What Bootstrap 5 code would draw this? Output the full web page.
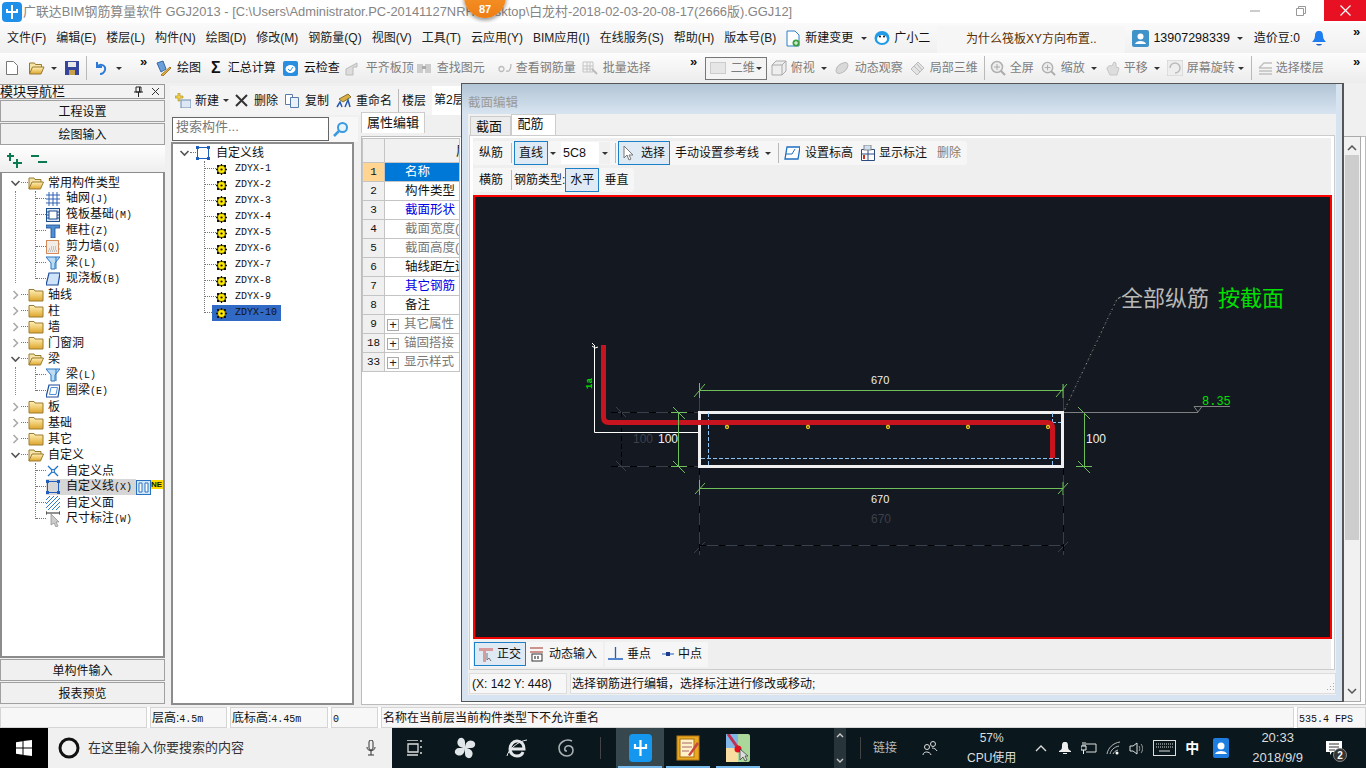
<!DOCTYPE html>
<html lang="zh-CN">
<head>
<meta charset="UTF-8">
<title>广联达BIM钢筋算量软件 GGJ2013</title>
<link href="https://cdn.jsdelivr.net/npm/bootstrap@5.3.2/dist/css/bootstrap.min.css" rel="stylesheet">
<style>
body{margin:0;width:1366px;height:768px;overflow:hidden;background:#f0f0f0;color:#111;font:12px/16px "Liberation Sans","Noto Sans CJK SC",sans-serif;display:flex;flex-direction:column;position:relative}
svg{display:block;flex:none}
.lm{font-family:"Liberation Mono","Noto Sans CJK SC",monospace;font-size:10px}
.titlebar{height:23px;background:#fff;color:#858585;font-size:12.9px;white-space:nowrap;padding-left:2px}
.titlebar svg{margin-right:1px}
.win-ctl{position:absolute;right:0;top:0;height:21px}
.win-close{width:42px;height:21px;background:#e81123}
.win-btn{width:46px;height:21px}
.orange-badge{position:absolute;left:464px;top:-24px;width:42px;height:42px;border-radius:50%;background:linear-gradient(#f9a13a,#ee7d12);box-shadow:0 2px 4px rgba(0,0,0,.45);color:#fff;font-weight:bold;font-size:11px;text-align:center;padding-top:25px}
.menubar{height:30px;background:linear-gradient(#fafafa,#f0f0f0);white-space:nowrap;padding-left:7px;gap:10px;position:relative}
.menubar .mi{color:#222}
.tip-tab{width:188px;height:27px;margin:2px -3px 0 -3px;background:#f6f6f6;color:#5b3100;text-align:center;line-height:26px;border-radius:3px;flex:none}
.phone{font-size:12.5px}
.toolbar{height:30px;background:linear-gradient(#fdfdfd,#ececec);white-space:nowrap;position:relative}
.off{color:#7d7d7d}
.caretx{width:0;height:0;border:3px solid transparent;border-top:3px solid #333;border-bottom:0;flex:none}
.sepx{width:1px;height:24px;background:#b9b9b9;flex:none}
.more{font-size:13px;font-weight:bold;line-height:10px;position:absolute;top:4px}
.more.at-right{left:1353px}.more.at-undo{left:140px}.more.at-mid{left:690px}
.combo2d{width:62px;height:23px;border:1px solid #777;background:#f4f4f4;padding:0 4px;flex:none}
.thumb2d{width:16px;height:12px;background:#e6e6e6;border:1px solid #ccc;margin-right:5px;flex:none}
.mgl2{margin-left:2px}.mgl3{margin-left:3px}.mgl4{margin-left:4px}.mgl5{margin-left:5px}.mgl6{margin-left:6px}.mgl7{margin-left:7px}.mgl8{margin-left:8px}.mgl9{margin-left:9px}.mgl10{margin-left:10px}.mgl11{margin-left:11px}.mgl12{margin-left:12px}.mgl13{margin-left:13px}.mgl14{margin-left:14px}.mgl15{margin-left:15px}.mgl19{margin-left:19px}.mgl23{margin-left:23px}.mgl25{margin-left:25px}.mgl29{margin-left:29px}.mgl30{margin-left:30px}.mgl32{margin-left:32px}.mgl34{margin-left:34px}.mgl54{margin-left:54px}.mgl72{margin-left:72px}
.mainarea{flex:1;min-height:0;margin-top:1px}
.navcol{width:165px;flex:none}
.navhead{height:15px;border:1px solid #999;border-left:0;font-size:13px;line-height:14px;background:#f3f3f3;flex:none}
.navbtn{height:22px;border:1px solid #a0a0a0;background:#f0f0f0;text-align:center;line-height:20px;padding-top:1px;margin-top:1px;flex:none}
.navbtn.tail{margin-bottom:3px}
.navtools{height:27px;background:linear-gradient(#fff,#eee);padding:8px 0 0 7px;gap:8px;flex:none}
.treebox{background:#fff;border:1px solid #8c8c8c;border-width:1px 2px 2px;overflow:hidden}
.tree-row{height:16px;white-space:nowrap;line-height:16px}
.tree-row.head{margin-top:2px}
.tree-kids{position:relative}
.tree-kids::before{content:"";position:absolute;left:33px;top:0;bottom:8px;border-left:1px dotted #777}
.tree-kids.deep::after{content:"";position:absolute;left:13px;top:0;bottom:4px;border-left:1px dotted #888}
.stub{width:7px;border-bottom:1px dotted #777;height:8px;align-self:flex-start;flex:none}
.chev{width:11px;height:16px;margin-left:8px;flex:none}
.mgl-kid{margin-left:34px;width:10px}.kid{margin-left:6px}
.hl-row{background:#d6d6d6;height:16px}
.newtag{background:#ffd800;font:bold 8px/9px "Liberation Sans",sans-serif;height:9px;width:14px;overflow:hidden;align-self:flex-start;margin-top:1px}
#comptool{height:29px;margin-top:2px;width:291px;background:#f4f4f4;flex:none;white-space:nowrap}
.floor-field{background:#fff;height:100%;flex:1;padding:6px 0 0 2px;margin-left:6px}
.ztreecol{width:188px;flex:none}
.propcol{margin-left:3px;min-width:0;width:1000px}
.ztree{height:563px;margin-left:1px;width:183px;border-width:2px;position:relative}
.ztree .tree-row.root{margin-top:1px}
.ztree .tree-row .chev{margin-left:6px}
.ztree .root-stub{width:6px}
.zline{position:relative}
.zline::before{content:"";position:absolute;left:31px;top:0;bottom:8px;border-left:1px dotted #777}
.zitem{padding-left:32px}
.zitem .stub{width:11px}
.zitem .stub.short{width:7px}
.zsel{background:#316ac5;width:69px;height:16px;padding-left:4px;flex:none}
.ztext{font-family:"Liberation Mono",monospace;font-size:10px}
.searchwrap{height:25px;margin:2px 0 0 2px;background:#f7f7f7}
.searchbox{width:157px;height:24px;border:1px solid #666;background:#fff;color:#777;padding:1px 0 0 3px;font-size:13px}
.proptab{height:21px;width:64px;background:#fff;border:1px solid #ccc;border-bottom:0;text-align:center;line-height:20px;font-size:13px;margin-top:-3px}
.prop-wrap{height:569px;background:#fff;border:1px solid #bbb;margin-top:3px;padding:1px 0 0}
.prop-table{border-collapse:collapse;table-layout:fixed;width:98px;margin:0}
.prop-table td,.prop-table th{border:1px solid #c4c4c4;height:19px;padding:0;font-weight:normal;line-height:17px;font-size:12.5px;white-space:nowrap;overflow:hidden}
.prop-table th{height:24px;background:#f1f1f1;text-align:left;padding-left:71px;font-size:13px}
.prop-table .rownum{width:22px;background:#f0f0f0;text-align:center;padding:0;font-family:"Liberation Mono",monospace;font-size:11px}
.prop-table .rowon{background:#ffd591}
.cellon{background:#0078d7;color:#fff}
.prop-table .pad20{padding-left:20px}
.linkblue{color:#0000e6}
.dimgray{color:#7a7a7a}
.plusbox{display:inline-block;width:12px;height:12px;border:1px solid #aaa;color:#222;line-height:9px;text-align:center;margin:0 5px 0 2px;font-size:13px;vertical-align:-1px}
.vscroll{position:absolute;left:1344px;top:136px;width:17px;height:566px;background:#f1f1f1;border:1px solid #aaa;border-width:1px 1px 1px 0}
.vthumb{height:385px;background:#cdcdcd;margin:18px 1px 0}
.vs-up{left:2px;top:7px}.vs-down{left:2px;bottom:6px}
.dialogwin{position:absolute;left:461px;top:83px;width:883px;height:619px;background:#d7e3f0;border:1px solid #555;border-width:1px 2px 1px 1px;padding-right:6px}
.dlg-title{height:30px;background:linear-gradient(#b2c5d6,#d8e4f0);color:#9a9a9a;font-size:12.5px;padding:11px 0 0 6px;line-height:16px}
.dlg-client{margin-left:6px;height:581px;background:#f0f0f0}
.dlg-tabs{height:21px;padding-left:2px}
.dlg-tab{height:19px;width:41px;margin-top:2px;background:#ececec;border:1px solid #ccc;border-bottom:0;text-align:center;font-size:13px;line-height:19px;padding-right:3px}
.dlg-tab.on{height:21px;width:45px;margin-top:0;background:#fff;line-height:17px;padding-right:6px}
.dlg-pane{height:535px;margin:0 1px;border:1px solid #ccc;background:#fff;padding:2px 3px 0}
.dlg-inner{background:#efefef;height:531px}
.rowtool{height:24px;white-space:nowrap;margin-top:3px;flex:none}
.toolbg{background:#f6f6f6;height:24px;border-radius:3px;padding-right:6px}
.actbtn{height:24px;border:1px solid #1b80c8;background:#dfeaf5;padding:0 4px;flex:none}
.mgr6{margin-right:6px}
.combo5{width:49px;height:22px;background:#fff;padding-left:2px;flex:none}
.combo5 .arrow{width:11px;height:22px;background:#f0f0f0}
.lat{font-size:12.5px}
.h-sep{height:20px}
.deltext{color:#8a7a6a}
.canvasbox{height:444px;margin:3px -1px 0 0;background:#141820;border:2px solid #f00;border-bottom-color:#e00;flex:none}
.botrow{height:26px;margin-top:2px;padding-left:1px;flex:none}
.botbg{background:#f6f6f6;height:25px;padding-right:6px}
.dlg-status{height:21px;margin:3px 0 0 1px;gap:3px}
.statcell{height:21px;background:#f7f7f7;border:1px solid #ddd;padding-left:1px;line-height:21px;white-space:nowrap}
.w-stat-a{width:98px;padding-left:2px}
.statbar{height:21px;gap:3px;background:#fff;flex:none}
.statbar .statcell{background:#f7f7f7;border-color:#d5d5d5}
.w-status1{width:147px}.w-status2{width:77px}.w-status3{width:98px}.w-status4{width:47px}.w-status5{width:69px}
.taskbar{height:40px;background:#0a181d;color:#ddd;white-space:nowrap;flex:none}
.startcell{width:48px;height:40px;background:#000;flex:none}
.searchtask{width:344px;height:40px;background:#f0f0f0;color:#333;font-size:13px;padding-left:10px;flex:none}
.tk{position:relative;height:40px;width:48px;flex:none}
.tk.on{background:#37474e}
.tk.under::after{content:"";position:absolute;left:2px;right:2px;bottom:0;height:2px;background:#76b9ed}
.trayscroll{width:12px;height:40px;background:#27353a;flex:none}
.tray2{line-height:20px;text-align:center;flex:none}
.date2{font-size:13px}
.linktxt{color:#bbb}
.darksep{height:22px;background:#444}
.fs-cn{font-size:14px}
.notif-badge{position:absolute;left:7px;top:7px;width:14px;height:14px;border-radius:50%;background:#333;color:#fff;font-size:10px;font-weight:bold;line-height:13px;text-align:center;border:1px solid #888}
</style>
</head>
<body>
<svg width="0" height="0" class="position-absolute">
<defs>
<linearGradient id="fy" x1="0" y1="0" x2="0" y2="1"><stop offset="0" stop-color="#fff2b8"/><stop offset="1" stop-color="#e0a52c"/></linearGradient>
<symbol id="fclosed" viewBox="0 0 16 14"><path d="M1 3V1.500h5l1 1.500h8v10H1z" fill="url(#fy)" stroke="#9a7a30"/></symbol>
<symbol id="fopen" viewBox="0 0 16 14"><path d="M1 13V2h5l1 1.500h6V6" fill="#f5e4a8" stroke="#9a7a30"/><path d="M1 13l3-7h11.500l-3 7z" fill="url(#fy)" stroke="#9a7a30"/></symbol>
<symbol id="cdown" viewBox="0 0 11 16"><path d="M1.500 6l4 4 4-4" fill="none" stroke="#555" stroke-width="1.600"/></symbol>
<symbol id="cright" viewBox="0 0 11 16"><path d="M3.500 4l4 4-4 4" fill="none" stroke="#aaa" stroke-width="1.600"/></symbol>
<symbol id="igrid" viewBox="0 0 14 14"><path d="M0 3h14M0 7h14M0 11h14M3 0v14M7 0v14M11 0v14" stroke="#2f62b4" fill="none"/></symbol>
<symbol id="iraft" viewBox="0 0 14 14"><rect x=".5" y=".5" width="13" height="13" fill="#dce8f6" stroke="#1c4d8c"/><rect x="3" y="3" width="8" height="8" fill="#fff" stroke="#1c4d8c"/><path d="M1 4h2M1 7h2M1 10h2M11 4h2M11 7h2M11 10h2" stroke="#1c4d8c"/></symbol>
<symbol id="icol" viewBox="0 0 14 14"><path d="M0 1h14v3H9v10H5V4H0z" fill="#4e8fd6" stroke="#1c4d8c" stroke-width=".8"/></symbol>
<symbol id="iwall" viewBox="0 0 14 14"><rect x=".5" y=".5" width="12" height="13" fill="#f1ece6" stroke="#d58a5a"/><path d="M2 11h9M3 9h8M5 7h5" stroke="#999" stroke-dasharray="1 1"/><path d="M13 4h1M13 9h1" stroke="#d58a5a"/></symbol>
<symbol id="ibeam" viewBox="0 0 14 14"><path d="M0 1h14L9 7v6H5V7z" fill="#bcdcf5" stroke="#2a75c0"/><path d="M10 1v12" stroke="#2a75c0"/></symbol>
<symbol id="islab" viewBox="0 0 14 14"><path d="M3 1h11l-2 12H0z" fill="#cfe4fa" stroke="#1c4d9c" stroke-width="1.200"/></symbol>
<symbol id="iring" viewBox="0 0 14 14"><path d="M3 1h11l-2 12H0z" fill="#fff" stroke="#1c4d9c" stroke-width="1.200"/><path d="M5 3.500h6.500L10 10.500H3.500z" fill="none" stroke="#4e8fd6"/></symbol>
<symbol id="ipoint" viewBox="0 0 14 14"><path d="M2 2l10 10M12 2L2 12" stroke="#1e73c8" stroke-width="1.300"/><circle cx="7" cy="7" r="1.500" fill="#fff" stroke="#1e73c8"/></symbol>
<symbol id="iline" viewBox="0 0 14 14"><rect x="1.500" y="1.500" width="11" height="11" fill="none" stroke="#1e5ec0"/><path d="M0 0h3v3H0zM11 0h3v3h-3zM0 11h3v3H0zM11 11h3v3h-3z" fill="#1e5ec0"/></symbol>
<symbol id="iarea" viewBox="0 0 14 14"><path d="M0 4l4-4M0 8l8-8M0 12L12 0M2 14L14 2M6 14l8-8M10 14l4-4" stroke="#2f7ad0"/></symbol>
<symbol id="gear" viewBox="0 0 11 11"><rect x="1" y="1" width="9" height="9" fill="#111"/><path d="M5.500 0v11M0 5.500h11M2 2l7 7M9 2l-7 7" stroke="#111" stroke-width="1.300"/><circle cx="5.500" cy="5.500" r="3.400" fill="#ffe800"/><circle cx="5.500" cy="5.500" r="1.300" fill="#111"/><path d="M1 4h9M1 7h9M4 1v9M7 1v9" stroke="#ffe800" stroke-width=".7"/></symbol>
<symbol id="cube" viewBox="0 0 16 16"><path d="M1 5l4-4h10v10l-4 4H1zM1 5h10v10M11 5l4-4" fill="#eee" stroke="#aaa"/></symbol>
<symbol id="mag" viewBox="0 0 16 16"><circle cx="7" cy="7" r="5.500" fill="#eee" stroke="#b0b0b0" stroke-width="1.500"/><path d="M11 11l4 4" stroke="#aaa" stroke-width="2"/><path d="M7 4v6M4 7h6" stroke="#aaa"/></symbol>
</defs>
</svg>

<div class="titlebar d-flex align-items-center">
  <svg width="20" height="20" viewBox="0 0 20 20"><rect width="20" height="20" rx="4" fill="#1e90ea"/><path d="M10 3v14M5 7v3h10V7" fill="none" stroke="#fff" stroke-width="2"/></svg>
  <span>广联达BIM钢筋算量软件 GGJ2013 - [C:\Users\Administrator.PC-20141127NRH\Desktop\白龙村-2018-02-03-20-08-17(2666版).GGJ12]</span>
</div>
<div class="orange-badge">87</div>
<div class="win-ctl d-flex">
  <div class="win-btn d-flex align-items-center justify-content-center"><svg width="10" height="10"><path d="M0 5h10" stroke="#999"/></svg></div>
  <div class="win-btn d-flex align-items-center justify-content-center"><svg width="10" height="10"><path d="M.5 2.500h7v7h-7zM2.500 2.500v-2h7v7h-2" fill="none" stroke="#999"/></svg></div>
  <div class="win-close d-flex align-items-center justify-content-center"><svg width="11" height="11"><path d="M.5.500l10 10M10.500.500l-10 10" stroke="#fff" stroke-width="1.200"/></svg></div>
</div>

<div class="menubar d-flex align-items-center">
  <span class="mi">文件(F)</span><span class="mi">编辑(E)</span><span class="mi">楼层(L)</span><span class="mi">构件(N)</span><span class="mi">绘图(D)</span><span class="mi">修改(M)</span><span class="mi">钢筋量(Q)</span><span class="mi">视图(V)</span><span class="mi">工具(T)</span><span class="mi">云应用(Y)</span><span class="mi">BIM应用(I)</span><span class="mi">在线服务(S)</span><span class="mi">帮助(H)</span><span class="mi">版本号(B)</span>
  <span class="d-flex align-items-center gap-1">
    <svg width="15" height="17" viewBox="0 0 15 17"><path d="M1 1h8l4 4v11H1z" fill="#fff" stroke="#2a7fc8"/><circle cx="10" cy="13" r="3.500" fill="#3ca040"/><path d="M10 11v4M8 13h4" stroke="#fff"/></svg>
    <span>新建变更</span><span class="caretx mgl4"></span>
    <svg width="16" height="16" viewBox="0 0 16 16" class="mgl3"><ellipse cx="8" cy="8" rx="7.500" ry="7" fill="#1f9be8"/><ellipse cx="8" cy="9" rx="5" ry="4" fill="#fff"/><circle cx="6" cy="6.500" r="1" fill="#111"/><circle cx="10" cy="6.500" r="1" fill="#111"/></svg>
    <span>广小二</span>
  </span>
  <div class="tip-tab">为什么筏板XY方向布置..</div>
  <span class="d-flex align-items-center gap-1">
    <svg width="17" height="17" viewBox="0 0 17 17"><rect width="17" height="17" rx="2" fill="#3f93c8"/><circle cx="8.500" cy="6.500" r="3" fill="#fff"/><path d="M3 14c1-4 10-4 11 0z" fill="#fff"/></svg>
    <span class="phone">13907298339</span><span class="caretx mgl3 me-1"></span><span class="mgl3">造价豆:0</span>
    <svg width="14" height="16" viewBox="0 0 14 16" class="ms-2"><path d="M7 1c-3 0-4 2-4 5 0 3-2 5-3 6h14c-1-1-3-3-3-6 0-3-1-5-4-5z" fill="#1e7ef0"/><path d="M4 14c1 2 5 2 6 0z" fill="#1e5ec0"/></svg>
  </span>
  <span class="more at-right">»</span>
</div>

<div class="toolbar d-flex align-items-center">
  <svg width="12" height="14" viewBox="0 0 12 14" class="mgl6"><path d="M.5.500h7l4 4v9H.500z" fill="#fff" stroke="#777"/></svg>
  <svg width="17" height="14" class="mgl10"><use href="#fopen"/></svg>
  <span class="caretx mgl6"></span>
  <svg width="14" height="14" viewBox="0 0 14 14" class="mgl8"><rect width="14" height="14" fill="#35459c"/><rect x="3" y="1" width="8" height="5" fill="#e8e8e8"/><rect x="4" y="9" width="6" height="5" fill="#c8a24a"/></svg>
  <span class="sepx mgl7"></span>
  <svg width="14" height="14" viewBox="0 0 14 14" class="mgl7"><path d="M3 1v5h5M3 6c3-4 9-2 8 3-1 3-3 4-5 4" fill="none" stroke="#2c7ad6" stroke-width="2"/></svg>
  <span class="caretx mgl8"></span>
  <span class="more at-undo">»</span>
  <svg width="16" height="16" viewBox="0 0 16 16" class="mgl34"><path d="M1 3l6-2 3 8-5 3z" fill="#6c9fd8" stroke="#3568a8"/><path d="M5 15l9-8 1 1-8 8z" fill="#e0b040" stroke="#a87a20"/></svg>
  <span class="mgl5">绘图</span>
  <b class="mgl10 fs-6">Σ</b><span class="mgl7">汇总计算</span>
  <svg width="15" height="15" viewBox="0 0 15 15" class="mgl7"><rect width="15" height="15" rx="2" fill="#2a8ee0"/><ellipse cx="7.500" cy="8" rx="5" ry="4" fill="#fff"/><path d="M5 8l2 2 3-4" fill="none" stroke="#2a8ee0"/></svg>
  <span class="mgl6">云检查</span>
  <svg width="15" height="15" viewBox="0 0 15 15" class="mgl5"><path d="M1 8l11-6v4H8v8H1z" fill="#ddd" stroke="#bbb"/></svg>
  <span class="off mgl6">平齐板顶</span>
  <svg width="14" height="12" viewBox="0 0 14 12" class="mgl3"><rect x="0" y="2" width="6" height="9" fill="#ccc"/><rect x="8" y="2" width="6" height="9" fill="#ccc"/><rect x="5" y="4" width="4" height="3" fill="#aaa"/></svg>
  <span class="off mgl6">查找图元</span>
  <svg width="14" height="10" viewBox="0 0 14 10" class="mgl13"><path d="M1 6a2.500 2.500 0 1 0 5 0 2.500 2.500 0 1 0-5 0M8 8c3 1 5-1 5-7" fill="none" stroke="#bbb" stroke-width="1.300"/></svg>
  <span class="off mgl4">查看钢筋量</span>
  <svg width="16" height="16" viewBox="0 0 16 16" class="mgl6"><path d="M1 2h10v10H1zM1 6h10M1 9h10M5 2v10M8 2v10" fill="none" stroke="#c4c4c4"/><path d="M10 9l5 5" stroke="#bbb" stroke-width="2"/></svg>
  <span class="off mgl5">批量选择</span>
  <span class="more at-mid">»</span>
  <div class="combo2d d-flex align-items-center mgl54"><span class="thumb2d"></span><span class="off">二维</span><span class="caretx ms-auto"></span></div>
  <svg width="16" height="16" class="mgl4"><use href="#cube"/></svg><span class="off mgl4">俯视</span><span class="caretx mgl6"></span>
  <svg width="16" height="16" viewBox="0 0 16 16" class="mgl7"><ellipse cx="8" cy="8" rx="7" ry="4" transform="rotate(-40 8 8)" fill="#d9d9d9" stroke="#bbb"/></svg><span class="off mgl5">动态观察</span>
  <svg width="15" height="15" viewBox="0 0 15 15" class="mgl7"><path d="M1 8l7-7 6 6-7 7z" fill="#e4e4e4" stroke="#bbb"/><path d="M4 5l6 6M7 3l5 6" stroke="#bbb"/></svg><span class="off mgl5">局部三维</span>
  <span class="sepx mgl6"></span>
  <svg width="16" height="16" class="mgl5"><use href="#mag"/></svg><span class="off mgl4">全屏</span>
  <svg width="15" height="15" class="mgl7"><use href="#mag"/></svg><span class="off mgl5">缩放</span><span class="caretx mgl6"></span>
  <svg width="15" height="16" viewBox="0 0 15 16" class="mgl8"><path d="M2 9c0-3 3-4 5-3l2-4 2 1v4l3 1-2 7H5z" fill="#ddd" stroke="#c6c6c6"/></svg><span class="off mgl4">平移</span><span class="caretx mgl6"></span>
  <svg width="16" height="16" viewBox="0 0 16 16" class="mgl7"><rect width="16" height="16" fill="#eee" stroke="#ccc"/><path d="M3 8a5 5 0 0 1 10 0 5 5 0 0 1-5 5" fill="none" stroke="#bbb" stroke-width="1.500"/></svg><span class="off mgl4">屏幕旋转</span><span class="caretx mgl3"></span>
  <span class="sepx mgl7"></span>
  <svg width="15" height="13" viewBox="0 0 15 13" class="mgl6"><path d="M1 6l5-5h8M1 9h13M1 12h13M1 6h13" fill="none" stroke="#c0c0c0" stroke-width="1.300"/></svg><span class="off mgl3">选择楼层</span>
  <span class="more at-right">»</span>
</div>

<div class="mainarea d-flex">
  <div class="navcol d-flex flex-column">
    <div class="navhead d-flex align-items-center"><span>模块导航栏</span>
      <svg width="9" height="11" viewBox="0 0 9 11" class="ms-auto"><path d="M2 1h5v5H2zM0 6h9M4.500 6v5M5.500 1v5" fill="none" stroke="#222"/></svg>
      <svg width="9" height="9" viewBox="0 0 9 9" class="ms-2 me-1"><path d="M1 1l7 7M8 1L1 8" stroke="#333"/></svg>
    </div>
    <div class="navbtn">工程设置</div>
    <div class="navbtn">绘图输入</div>
    <div class="navtools d-flex">
      <svg width="16" height="15" viewBox="0 0 16 15"><path d="M3 0v8M0 3h7" stroke="#0a7a50" stroke-width="2"/><path d="M10 6v9M6 10h9" stroke="#0a7a50" stroke-width="2"/></svg>
      <svg width="16" height="15" viewBox="0 0 16 15"><path d="M0 3h8" stroke="#0a7a50" stroke-width="2"/><path d="M7 9h9" stroke="#0a7a50" stroke-width="2"/></svg>
    </div>
    <div class="treebox flex-grow-1">
      <div class="tree-row head d-flex align-items-center"><svg class="chev"><use href="#cdown"/></svg><span class="stub"></span><svg width="16" height="14" class="me-1"><use href="#fopen"/></svg><span>常用构件类型</span></div>
      <div class="tree-kids deep">
        <div class="tree-row d-flex align-items-center"><span class="stub mgl-kid"></span><svg width="14" height="14"><use href="#igrid"/></svg><span class="kid">轴网<span class="lm">(J)</span></span></div>
        <div class="tree-row d-flex align-items-center"><span class="stub mgl-kid"></span><svg width="14" height="14"><use href="#iraft"/></svg><span class="kid">筏板基础<span class="lm">(M)</span></span></div>
        <div class="tree-row d-flex align-items-center"><span class="stub mgl-kid"></span><svg width="14" height="14"><use href="#icol"/></svg><span class="kid">框柱<span class="lm">(Z)</span></span></div>
        <div class="tree-row d-flex align-items-center"><span class="stub mgl-kid"></span><svg width="14" height="14"><use href="#iwall"/></svg><span class="kid">剪力墙<span class="lm">(Q)</span></span></div>
        <div class="tree-row d-flex align-items-center"><span class="stub mgl-kid"></span><svg width="14" height="14"><use href="#ibeam"/></svg><span class="kid">梁<span class="lm">(L)</span></span></div>
        <div class="tree-row d-flex align-items-center"><span class="stub mgl-kid"></span><svg width="14" height="14"><use href="#islab"/></svg><span class="kid">现浇板<span class="lm">(B)</span></span></div>
      </div>
      <div class="tree-row d-flex align-items-center"><svg class="chev"><use href="#cright"/></svg><span class="stub"></span><svg width="16" height="14" class="me-1"><use href="#fclosed"/></svg><span>轴线</span></div>
      <div class="tree-row d-flex align-items-center"><svg class="chev"><use href="#cright"/></svg><span class="stub"></span><svg width="16" height="14" class="me-1"><use href="#fclosed"/></svg><span>柱</span></div>
      <div class="tree-row d-flex align-items-center"><svg class="chev"><use href="#cright"/></svg><span class="stub"></span><svg width="16" height="14" class="me-1"><use href="#fclosed"/></svg><span>墙</span></div>
      <div class="tree-row d-flex align-items-center"><svg class="chev"><use href="#cright"/></svg><span class="stub"></span><svg width="16" height="14" class="me-1"><use href="#fclosed"/></svg><span>门窗洞</span></div>
      <div class="tree-row d-flex align-items-center"><svg class="chev"><use href="#cdown"/></svg><span class="stub"></span><svg width="16" height="14" class="me-1"><use href="#fopen"/></svg><span>梁</span></div>
      <div class="tree-kids deep">
        <div class="tree-row d-flex align-items-center"><span class="stub mgl-kid"></span><svg width="14" height="14"><use href="#ibeam"/></svg><span class="kid">梁<span class="lm">(L)</span></span></div>
        <div class="tree-row d-flex align-items-center"><span class="stub mgl-kid"></span><svg width="14" height="14"><use href="#iring"/></svg><span class="kid">圈梁<span class="lm">(E)</span></span></div>
      </div>
      <div class="tree-row d-flex align-items-center"><svg class="chev"><use href="#cright"/></svg><span class="stub"></span><svg width="16" height="14" class="me-1"><use href="#fclosed"/></svg><span>板</span></div>
      <div class="tree-row d-flex align-items-center"><svg class="chev"><use href="#cright"/></svg><span class="stub"></span><svg width="16" height="14" class="me-1"><use href="#fclosed"/></svg><span>基础</span></div>
      <div class="tree-row d-flex align-items-center"><svg class="chev"><use href="#cright"/></svg><span class="stub"></span><svg width="16" height="14" class="me-1"><use href="#fclosed"/></svg><span>其它</span></div>
      <div class="tree-row d-flex align-items-center"><svg class="chev"><use href="#cdown"/></svg><span class="stub"></span><svg width="16" height="14" class="me-1"><use href="#fopen"/></svg><span>自定义</span></div>
      <div class="tree-kids">
        <div class="tree-row d-flex align-items-center"><span class="stub mgl-kid"></span><svg width="14" height="14"><use href="#ipoint"/></svg><span class="kid">自定义点</span></div>
        <div class="tree-row d-flex align-items-center"><span class="stub mgl-kid"></span><span class="hl-row d-flex align-items-center pe-1"><svg width="14" height="14"><use href="#iline"/></svg><span class="kid">自定义线<span class="lm">(X)</span></span></span>
          <svg width="15" height="15" viewBox="0 0 15 15"><rect x=".5" y=".5" width="14" height="14" fill="#cfe6fb" stroke="#2a72c0"/><path d="M3 3h3v9H3zM9 3h3v9H9z" fill="#fff" stroke="#2a72c0"/></svg><span class="newtag">NE</span></div>
        <div class="tree-row d-flex align-items-center"><span class="stub mgl-kid"></span><svg width="14" height="14"><use href="#iarea"/></svg><span class="kid">自定义面</span></div>
        <div class="tree-row d-flex align-items-center"><span class="stub mgl-kid"></span><svg width="14" height="16" viewBox="0 0 14 16"><path d="M0 2h14M0 0v4M14 0v4" stroke="#222"/><path d="M5 3v11l3-2 2 4 2-1-2-4h3z" fill="#ccc" stroke="#888" stroke-width=".7"/></svg><span class="kid">尺寸标注<span class="lm">(W)</span></span></div>
      </div>
    </div>
    <div class="navbtn">单构件输入</div>
    <div class="navbtn tail">报表预览</div>
  </div>

  <div class="flex-grow-1 d-flex flex-column mgl5 min-w-0">
    <div class="d-flex align-items-center" id="comptool">
      <svg width="16" height="15" viewBox="0 0 16 15" class="mgl5"><path d="M3 0h2v3h3v2H5v3H3V5H0V3h3z" fill="#f2d24a" stroke="#a88a20" stroke-width=".6"/><rect x="6" y="7" width="10" height="8" fill="#dde8f4" stroke="#6a8ab0"/></svg>
      <span class="mgl4">新建</span><span class="caretx mgl4"></span>
      <svg width="13" height="13" viewBox="0 0 13 13" class="mgl6"><path d="M1 1l11 11M12 1L1 12" stroke="#333" stroke-width="2"/></svg><span class="mgl6">删除</span>
      <svg width="14" height="14" viewBox="0 0 14 14" class="mgl7"><path d="M.5.500h7v10h-7z" fill="#fff" stroke="#5a7ca8"/><path d="M5.500 3.500h8v10h-8z" fill="#e8f0fa" stroke="#5a7ca8"/></svg><span class="mgl6">复制</span>
      <svg width="16" height="15" viewBox="0 0 16 15" class="mgl7"><path d="M3 6l9-5 3 3-8 5z" fill="#d8b040" stroke="#8a7030"/><path d="M1 14l3-5 2 5M9 14l3-7 2 7" fill="none" stroke="#2a5ab0" stroke-width="1.500"/></svg><span class="mgl4">重命名</span>
      <span class="sepx mgl6"></span><span class="mgl3">楼层</span><span class="floor-field">第2层</span>
    </div>
    <div class="d-flex flex-grow-1">
      <div class="d-flex flex-column ztreecol">
        <div class="searchwrap d-flex"><div class="searchbox">搜索构件...</div>
          <svg width="16" height="16" viewBox="0 0 16 16" class="mgl4 mt-1"><circle cx="9.500" cy="6.500" r="4.500" fill="#e8f4fc" stroke="#3a9ae0" stroke-width="2"/><path d="M6 10l-5 5" stroke="#3a9ae0" stroke-width="2.500"/></svg></div>
        <div class="treebox ztree">
          <div class="tree-row root d-flex align-items-center"><svg class="chev"><use href="#cdown"/></svg><span class="stub root-stub"></span><svg width="14" height="14"><use href="#iline"/></svg><span class="mgl6">自定义线</span></div>
          <div class="zline">
            <div class="tree-row d-flex align-items-center zitem"><span class="stub"></span><svg width="11" height="11"><use href="#gear"/></svg><span class="ztext mgl8">ZDYX-1</span></div>
            <div class="tree-row d-flex align-items-center zitem"><span class="stub"></span><svg width="11" height="11"><use href="#gear"/></svg><span class="ztext mgl8">ZDYX-2</span></div>
            <div class="tree-row d-flex align-items-center zitem"><span class="stub"></span><svg width="11" height="11"><use href="#gear"/></svg><span class="ztext mgl8">ZDYX-3</span></div>
            <div class="tree-row d-flex align-items-center zitem"><span class="stub"></span><svg width="11" height="11"><use href="#gear"/></svg><span class="ztext mgl8">ZDYX-4</span></div>
            <div class="tree-row d-flex align-items-center zitem"><span class="stub"></span><svg width="11" height="11"><use href="#gear"/></svg><span class="ztext mgl8">ZDYX-5</span></div>
            <div class="tree-row d-flex align-items-center zitem"><span class="stub"></span><svg width="11" height="11"><use href="#gear"/></svg><span class="ztext mgl8">ZDYX-6</span></div>
            <div class="tree-row d-flex align-items-center zitem"><span class="stub"></span><svg width="11" height="11"><use href="#gear"/></svg><span class="ztext mgl8">ZDYX-7</span></div>
            <div class="tree-row d-flex align-items-center zitem"><span class="stub"></span><svg width="11" height="11"><use href="#gear"/></svg><span class="ztext mgl8">ZDYX-8</span></div>
            <div class="tree-row d-flex align-items-center zitem"><span class="stub"></span><svg width="11" height="11"><use href="#gear"/></svg><span class="ztext mgl8">ZDYX-9</span></div>
            <div class="tree-row d-flex align-items-center zitem"><span class="stub short"></span><span class="zsel d-flex align-items-center"><svg width="11" height="11"><use href="#gear"/></svg><span class="ztext mgl8">ZDYX-10</span></span></div>
          </div>
        </div>
      </div>
      <div class="flex-grow-1 propcol">
        <div class="proptab">属性编辑</div>
        <div class="prop-wrap">
          <table class="prop-table">
            <tr><th class="rownum"></th><th>属性名称</th></tr>
            <tr><td class="rownum rowon">1</td><td class="cellon pad20">名称</td></tr>
            <tr><td class="rownum">2</td><td class="pad20">构件类型</td></tr>
            <tr><td class="rownum">3</td><td class="pad20 linkblue">截面形状</td></tr>
            <tr><td class="rownum">4</td><td class="pad20 dimgray">截面宽度(mm)</td></tr>
            <tr><td class="rownum">5</td><td class="pad20 dimgray">截面高度(mm)</td></tr>
            <tr><td class="rownum">6</td><td class="pad20">轴线距左边线距离(mm)</td></tr>
            <tr><td class="rownum">7</td><td class="pad20 linkblue">其它钢筋</td></tr>
            <tr><td class="rownum">8</td><td class="pad20">备注</td></tr>
            <tr><td class="rownum">9</td><td class="dimgray"><span class="plusbox">+</span>其它属性</td></tr>
            <tr><td class="rownum">18</td><td class="dimgray"><span class="plusbox">+</span>锚固搭接</td></tr>
            <tr><td class="rownum">33</td><td class="dimgray"><span class="plusbox">+</span>显示样式</td></tr>
          </table>
        </div>
      </div>
    </div>
  </div>
</div>

<div class="statbar d-flex">
  <div class="statcell w-status1"></div>
  <div class="statcell w-status2">层高:<span class="lm">4.5m</span></div>
  <div class="statcell w-status3">底标高:<span class="lm">4.45m</span></div>
  <div class="statcell w-status4"><span class="lm">0</span></div>
  <div class="statcell flex-grow-1">名称在当前层当前构件类型下不允许重名</div>
  <div class="statcell w-status5"><span class="lm">535.4 FPS</span></div>
</div>

<div class="taskbar d-flex align-items-center">
  <div class="startcell d-flex align-items-center justify-content-center"><svg width="16" height="16" viewBox="0 0 16 16"><path d="M0 2.300l6.500-1V7.500H0zM7.500 1.100L16 0v7.500H7.500zM0 8.500h6.500v6.300L0 13.800zM7.500 8.500H16V16l-8.500-1.100z" fill="#fff"/></svg></div>
  <div class="searchtask d-flex align-items-center">
    <svg width="22" height="22" viewBox="0 0 22 22"><circle cx="11" cy="11" r="9" fill="none" stroke="#111" stroke-width="3"/></svg>
    <span class="mgl8">在这里输入你要搜索的内容</span>
    <svg width="10" height="16" viewBox="0 0 10 16" class="ms-auto me-3"><rect x="3" y="0" width="4" height="10" rx="2" fill="none" stroke="#333"/><path d="M1 7c0 5 8 5 8 0M5 11v4M2 15h6" fill="none" stroke="#333"/></svg>
  </div>
  <svg width="15" height="16" viewBox="0 0 15 16" class="mgl15"><path d="M1 4h10v8H1zM0 0h11M0 15h11M13 1h2M13 7h2M13 13h2" fill="none" stroke="#ddd" stroke-width="1.300"/></svg>
  <svg width="22" height="22" viewBox="0 0 22 22" class="mgl32"><path d="M11 11C5 11 2 7 4 3s7-2 7 2zM11 11c0-6 4-9 8-7s2 7-2 7zM11 11c6 0 9 4 7 8s-7 2-7-2zM11 11c0 6-4 9-8 7s-2-7 2-7z" fill="#dfe5e8"/></svg>
  <svg width="22" height="22" viewBox="0 0 22 22" class="mgl30"><path d="M4 12h14c0-5-3-8-7-8s-7 4-7 8c0 5 4 7 7 7 3 0 5-1 6-4" fill="none" stroke="#e4e8ea" stroke-width="3"/><path d="M1 19c1-6 11-15 20-16" fill="none" stroke="#e4e8ea"/></svg>
  <svg width="18" height="20" viewBox="0 0 18 20" class="mgl29"><path d="M15 3C8 0 2 5 2 10s4 8 8 8 6-3 6-6-3-5-6-4-3 5 0 5" fill="none" stroke="#aab0b3" stroke-width="1.600"/></svg>
  <span class="sepx darksep mgl25"></span>
  <div class="tk on under mgl15 d-flex align-items-center justify-content-center"><svg width="23" height="28" viewBox="0 0 23 28"><rect width="23" height="28" rx="4" fill="#1597f0"/><path d="M11.500 6v16M6 10v4h11v-4" fill="none" stroke="#fff" stroke-width="2.200"/></svg></div>
  <div class="tk under d-flex align-items-center justify-content-center"><svg width="24" height="26" viewBox="0 0 24 26"><rect x="1" y="1" width="22" height="24" fill="#e8a820" stroke="#b87810"/><rect x="4" y="4" width="14" height="18" fill="#fff2c8" stroke="#a87010"/><path d="M6 8h10M6 12h10M6 16h7" stroke="#a66"/><path d="M12 20l9-13 2 2-9 12z" fill="#c44"/></svg></div>
  <div class="tk under mgl2 d-flex align-items-center justify-content-center"><svg width="24" height="28" viewBox="0 0 24 28"><rect width="24" height="28" rx="2" fill="#a9d89a"/><path d="M0 0h12v14H0z" fill="#7fb8e8"/><path d="M0 14h12v14H0z" fill="#f8dca0"/><path d="M2 0l10 14" stroke="#c03050" stroke-width="3"/><circle cx="12" cy="15" r="3.500" fill="#e01020"/><path d="M14 15v11l3-3 2 4 2-1-2-4h3z" fill="#ddd" stroke="#333" stroke-width=".7"/></svg></div>
  <div class="trayscroll d-flex flex-column justify-content-between align-items-center py-1 mgl72"><svg width="8" height="6" viewBox="0 0 8 6"><path d="M1 5l3-3 3 3" fill="none" stroke="#ccc" stroke-width="1.400"/></svg><svg width="8" height="6" viewBox="0 0 8 6"><path d="M1 1l3 3 3-3" fill="none" stroke="#ccc" stroke-width="1.400"/></svg></div>
  <span class="sepx darksep mgl14"></span>
  <span class="mgl12 linktxt">链接</span>
  <svg width="16" height="16" viewBox="0 0 16 16" class="mgl25"><circle cx="11" cy="4" r="2.500" fill="none" stroke="#ddd"/><circle cx="5" cy="7" r="2.500" fill="none" stroke="#ddd"/><path d="M1 15c0-4 7-4 8 0M10 8c2 0 4 1 5 3" fill="none" stroke="#ddd"/></svg>
  <div class="tray2 mgl29">57%<br>CPU使用</div>
  <svg width="12" height="8" viewBox="0 0 12 8" class="mgl19"><path d="M1 7l5-5 5 5" fill="none" stroke="#ddd" stroke-width="1.300"/></svg>
  <svg width="12" height="14" viewBox="0 0 12 14" class="mgl12"><path d="M6 1C3 1 3 3 3 6c0 2-1 3-3 4v1h12v-1c-2-1-3-2-3-4 0-3 0-5-3-5z" fill="#eee"/><path d="M4 12h4v1H4z" fill="#eee"/></svg>
  <svg width="16" height="12" viewBox="0 0 16 12" class="mgl10"><path d="M5 2h10v8H5" fill="none" stroke="#ddd"/><path d="M0 4h5v4H0zM2 0v4M4 0v4M2.500 8v4" fill="none" stroke="#eee"/></svg>
  <svg width="15" height="14" viewBox="0 0 15 14" class="mgl9"><path d="M1 13C2 7 7 2 14 1M4 13c1-4 4-7 9-8M7 13c1-2 2-3 5-4" fill="none" stroke="#bbb"/><circle cx="11" cy="12" r="1.500" fill="#fff"/></svg>
  <svg width="15" height="13" viewBox="0 0 15 13" class="mgl8"><path d="M1 4h3l4-3v11L4 9H1z" fill="none" stroke="#ddd"/><path d="M10 4c1 1 1 4 0 5M12 2c2 2 2 7 0 9" fill="none" stroke="#999"/></svg>
  <svg width="23" height="16" viewBox="0 0 23 16" class="mgl9"><rect x=".5" y=".5" width="22" height="15" fill="none" stroke="#ddd"/><path d="M3 4h17M3 7h17" stroke="#ddd" stroke-dasharray="1 1"/><path d="M6 11h11" stroke="#ddd"/></svg>
  <span class="mgl9 fw-bold text-white fs-cn">中</span>
  <svg width="16" height="20" viewBox="0 0 16 20" class="mgl14"><rect width="16" height="20" rx="2" fill="#1e7ee0"/><circle cx="8" cy="8" r="3.500" fill="#fff"/><path d="M2 16c1-4 11-4 12 0z" fill="#fff"/></svg>
  <div class="tray2 date2 mgl23">20:33<br>2018/9/9</div>
  <div class="position-relative mgl23"><svg width="16" height="15" viewBox="0 0 16 15"><path d="M0 0h16v11H6l-2 3v-3H0z" fill="#fff"/><path d="M3 3h10M3 6h10M3 9h6" stroke="#333"/></svg><span class="notif-badge">2</span></div>
</div>

<div class="dialogwin">
  <div class="dlg-title">截面编辑</div>
  <div class="dlg-client">
    <div class="dlg-tabs d-flex"><div class="dlg-tab">截面</div><div class="dlg-tab on">配筋</div></div>
    <div class="dlg-pane">
      <div class="dlg-inner d-flex flex-column">
        <div class="rowtool d-flex align-items-center">
          <div class="toolbg d-flex align-items-center">
            <span class="mgl6">纵筋</span><span class="sepx mgl8 h-sep"></span>
            <span class="actbtn d-flex align-items-center mgl2">直线</span><span class="caretx mgl2"></span>
            <span class="combo5 d-flex align-items-center justify-content-between mgl5"><span class="lat">5C8</span><span class="arrow d-flex align-items-center justify-content-center"><span class="caretx"></span></span></span>
            <span class="sepx mgl5 h-sep"></span>
            <span class="actbtn d-flex align-items-center mgl2"><svg width="12" height="16" viewBox="0 0 12 16" class="mgr6"><path d="M1 1v12l3-3 2 5 2-1-2-4h4z" fill="#fff" stroke="#777"/></svg>选择</span>
            <span class="mgl5">手动设置参考线</span><span class="caretx mgl6"></span>
            <span class="sepx mgl7 h-sep"></span>
            <svg width="16" height="14" viewBox="0 0 16 14" class="mgl5"><path d="M3 1h13l-2 12H1z" fill="#fff" stroke="#1e6fc0" stroke-width="1.300"/><path d="M2 8h6l3-5" fill="none" stroke="#1e6fc0"/></svg>
            <span class="mgl5">设置标高</span>
            <svg width="14" height="16" viewBox="0 0 14 16" class="mgl8"><path d="M.5 4.500h13v11H.500zM.5 9h13M7 4v11" fill="#fff" stroke="#2a4a80"/><rect x="3" y="0" width="7" height="5" fill="#cfe0f4" stroke="#888"/><rect x="2" y="10" width="2" height="4" fill="#d03020"/></svg>
            <span class="mgl4">显示标注</span>
            <span class="mgl10 deltext">删除</span>
          </div>
        </div>
        <div class="rowtool d-flex align-items-center">
          <div class="toolbg d-flex align-items-center">
            <span class="mgl6">横筋</span><span class="sepx mgl8 h-sep"></span>
            <span class="mgl2">钢筋类型:</span>
            <span class="actbtn d-flex align-items-center">水平</span>
            <span class="mgl5">垂直</span>
          </div>
        </div>
        <div class="canvasbox">
          <svg width="855" height="440" viewBox="475 197 855 440" font-family="Liberation Sans, Noto Sans CJK SC, sans-serif">
            <g fill="none" stroke="#394049">
              <path d="M611 412.500H698M611 466.500H698M699.500 468V555M1063.500 468V555M699.500 383V411M1063.500 384V411M699.500 545.500H1063"/>
              <path d="M616 407l10 10M616 461l10 10M694 553l11-11M1058 552l10-10"/>
            </g>
            <g fill="none" stroke="#000" stroke-dasharray="7 12">
              <path d="M611 412.500H698M611 466.500H698M699.500 468V555M1063.500 468V555M699.500 545.500H1063"/>
            </g>
            <path d="M621.500 412V466" stroke="#000" stroke-dasharray="5 3" fill="none"/>
            <path d="M594.500 346V432.500H698" fill="none" stroke="#fff"/>
            <path d="M592 346l3 2 3-1M592 343l3 3" fill="none" stroke="#fff"/>
            <rect x="699.500" y="412.500" width="363" height="54" fill="none" stroke="#f0f0f0" stroke-width="3"/>
            <path d="M708.500 413V465M1052.500 413V465" stroke="#8cc4f5" stroke-dasharray="4 2" fill="none"/>
            <path d="M701 458.500H1061M1052 422.500H1061" stroke="#8cc4f5" stroke-dasharray="4 2" fill="none"/>
            <path d="M603.500 345V417Q603.500 422.500 609 422.500H1047Q1052.500 422.500 1052.500 428V458" fill="none" stroke="#c8141e" stroke-width="5"/>
            <g fill="none" stroke="#e8c820" stroke-width="1.300">
              <circle cx="727" cy="427" r="1.500"/><circle cx="808" cy="427" r="1.500"/><circle cx="888" cy="427" r="1.500"/><circle cx="968" cy="427" r="1.500"/><circle cx="1048" cy="427" r="1.500"/>
            </g>
            <g fill="none" stroke="#6ebf5a">
              <path d="M699 390.500H1063M699.500 383V398M1063 384V398M694 397l11-13M1056 397l11-13"/>
              <path d="M678.500 412V466M671 412.500H687M671 466.500H687M673 407l12 12M673 461l12 12"/>
              <path d="M699 488.500H1063M699.500 480V495M1063 482V495M695 494l10-11M1058 494l10-11"/>
              <path d="M1084.500 412V466M1076 466.500H1092M1078 407l12 12M1078 461l12 12"/>
            </g>
            <path d="M1064 412.500H1198" stroke="#808080"/>
            <path d="M1194 406.500H1230M1194 406.500L1198 412L1202 406.500" fill="none" stroke="#808080"/>
            <text x="1202" y="405" fill="#00e000" font-family="Liberation Mono, monospace" font-size="12">8.35</text>
            <path d="M1064 411L1117 299L1121 297" fill="none" stroke="#a8a8a8" stroke-dasharray="3 2"/>
            <path d="M1064 411L1117 299" fill="none" stroke="#000" stroke-dasharray="2 3"/>
            <text x="1121" y="306" fill="#b8b8b8" font-size="22">全部纵筋</text>
            <text x="1218" y="306" fill="#00e000" font-size="22">按截面</text>
            <g font-size="11" fill="#f0f0f0">
              <text x="871" y="384">670</text><text x="871" y="503">670</text>
              <text x="658" y="443" font-size="12">100</text><text x="1086" y="443" font-size="12">100</text>
            </g>
            <g font-size="12" fill="#3b414b">
              <text x="633" y="443">100</text><text x="871" y="523">670</text>
            </g>
            <text transform="translate(592 389) rotate(-90)" font-family="Liberation Mono, monospace" font-size="9" fill="#00e000" font-weight="bold">1a</text>
          </svg>
        </div>
        <div class="botrow d-flex align-items-center">
          <div class="botbg d-flex align-items-center">
            <span class="actbtn d-flex align-items-center"><svg width="14" height="16" viewBox="0 0 14 16" class="me-1"><path d="M0 2h14v3H7v11H4V5H0z" fill="#d89a9a"/><path d="M8 7v7l2-2 2 3" fill="none" stroke="#777"/></svg>正交</span>
            <svg width="15" height="15" viewBox="0 0 15 15" class="mgl3"><path d="M1 1h13M1 5h13" stroke="#a03020"/><rect x="3" y="7" width="10" height="7" fill="#fff" stroke="#333"/><path d="M6 9v3M9 9v3" stroke="#111"/></svg>
            <span class="mgl5">动态输入</span>
          </div>
          <div class="botbg d-flex align-items-center mgl2">
            <svg width="15" height="14" viewBox="0 0 15 14" class="mgl3"><path d="M7.500 0v11M0 12h15" stroke="#1e5ec0" stroke-width="1.300"/></svg>
            <span class="mgl4">垂点</span>
            <svg width="12" height="6" viewBox="0 0 12 6" class="mgl11"><path d="M0 3h12" stroke="#1e5ec0"/><rect x="4" y="1" width="4" height="4" fill="#1a3a90"/></svg>
            <span class="mgl4">中点</span>
          </div>
        </div>
      </div>
    </div>
    <div class="dlg-status d-flex">
      <div class="statcell w-stat-a">(X: 142 Y: 448)</div>
      <div class="statcell flex-grow-1 d-flex">选择钢筋进行编辑，选择标注进行修改或移动;
        <svg width="10" height="10" viewBox="0 0 10 10" class="ms-auto mt-2"><path d="M8 1h1v1H8zM5 4h1v1H5zM8 4h1v1H8zM2 7h1v1H2zM5 7h1v1H5zM8 7h1v1H8z" fill="#aaa"/></svg>
      </div>
    </div>
  </div>
</div>
<div class="vscroll d-flex flex-column">
  <svg width="12" height="8" viewBox="0 0 12 8" class="position-absolute vs-up"><path d="M2 6l4-4 4 4" fill="none" stroke="#555" stroke-width="1.500"/></svg>
  <div class="vthumb"></div>
  <svg width="12" height="8" viewBox="0 0 12 8" class="position-absolute vs-down"><path d="M2 2l4 4 4-4" fill="none" stroke="#555" stroke-width="1.500"/></svg>
</div>
</body>
</html>
